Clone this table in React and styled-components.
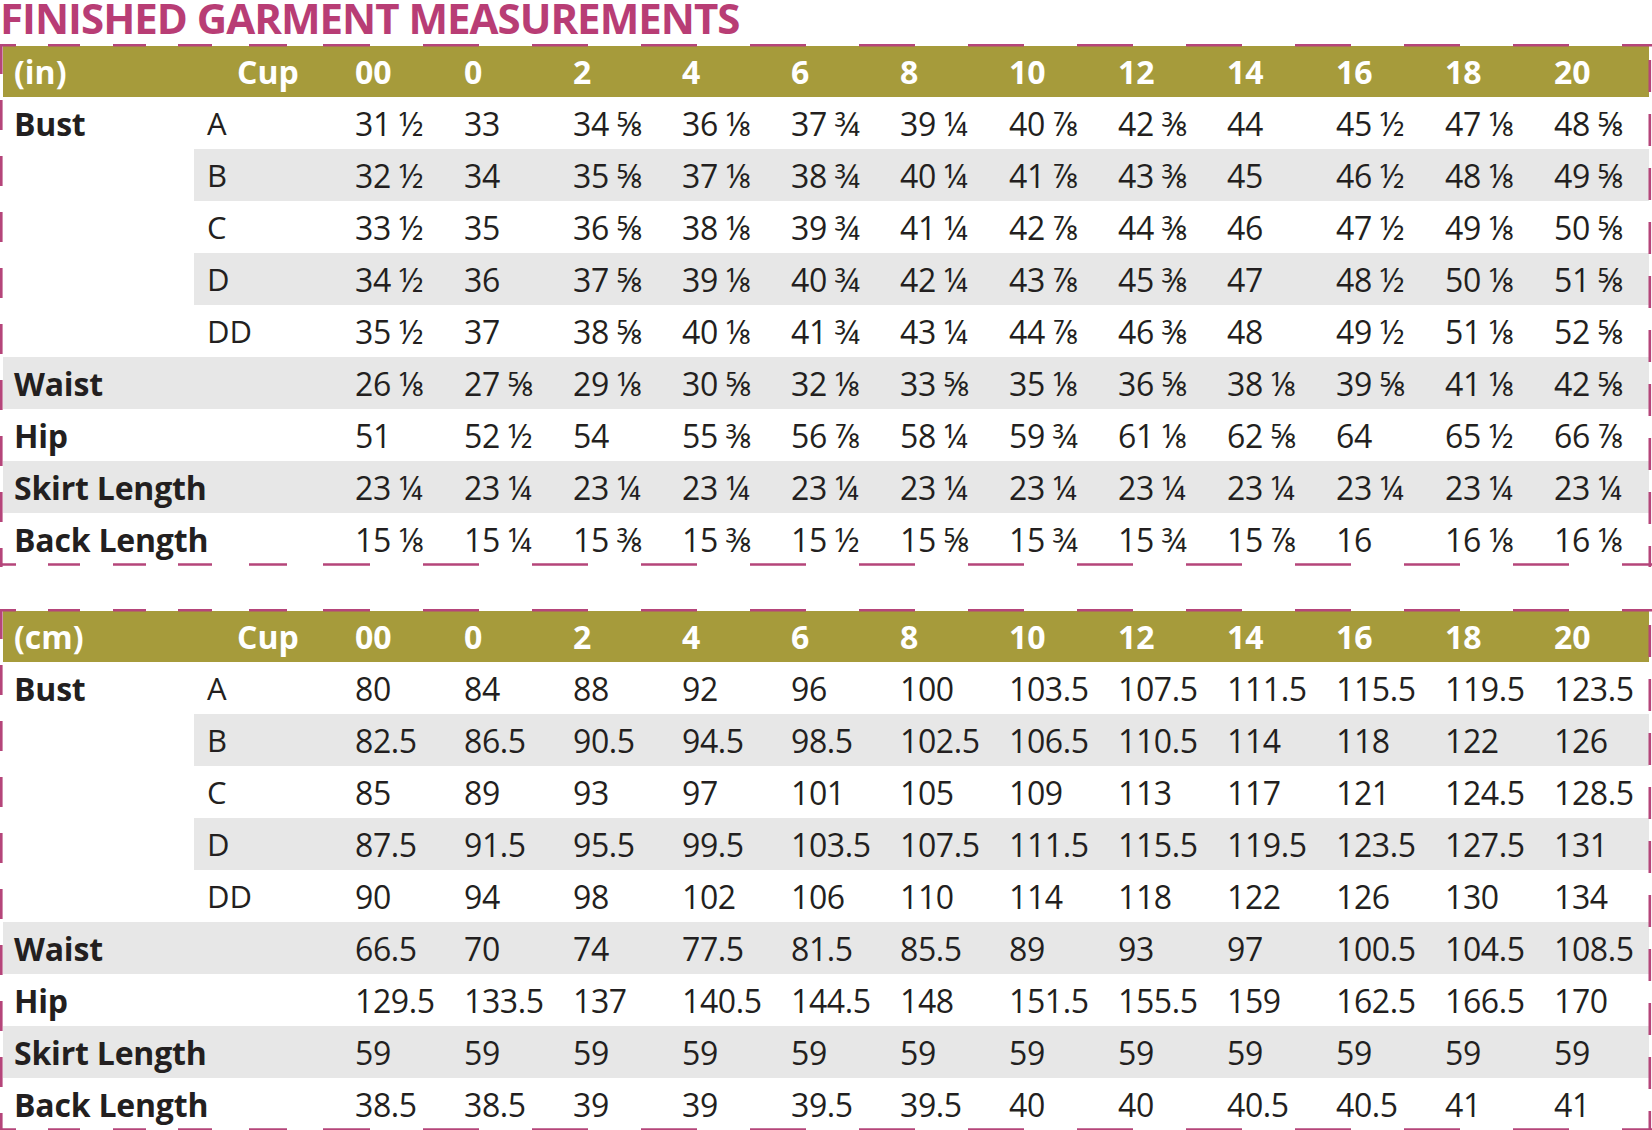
import styled, { createGlobalStyle } from "styled-components";

const GlobalStyle = createGlobalStyle`
  html, body {
    margin: 0;
    padding: 0;
    background: #fff;
  }
  body {
    font-family: "Open Sans", "DejaVu Sans", sans-serif;
    color: #231f20;
  }
`;

const SIZES = ["00", "0", "2", "4", "6", "8", "10", "12", "14", "16", "18", "20"];

const inches = [
  { label: "Bust", cup: "A", values: ["31 ½", "33", "34 ⅝", "36 ⅛", "37 ¾", "39 ¼", "40 ⅞", "42 ⅜", "44", "45 ½", "47 ⅛", "48 ⅝"] },
  { cup: "B", shade: true, values: ["32 ½", "34", "35 ⅝", "37 ⅛", "38 ¾", "40 ¼", "41 ⅞", "43 ⅜", "45", "46 ½", "48 ⅛", "49 ⅝"] },
  { cup: "C", values: ["33 ½", "35", "36 ⅝", "38 ⅛", "39 ¾", "41 ¼", "42 ⅞", "44 ⅜", "46", "47 ½", "49 ⅛", "50 ⅝"] },
  { cup: "D", shade: true, values: ["34 ½", "36", "37 ⅝", "39 ⅛", "40 ¾", "42 ¼", "43 ⅞", "45 ⅜", "47", "48 ½", "50 ⅛", "51 ⅝"] },
  { cup: "DD", values: ["35 ½", "37", "38 ⅝", "40 ⅛", "41 ¾", "43 ¼", "44 ⅞", "46 ⅜", "48", "49 ½", "51 ⅛", "52 ⅝"] },
  { label: "Waist", shade: true, values: ["26 ⅛", "27 ⅝", "29 ⅛", "30 ⅝", "32 ⅛", "33 ⅝", "35 ⅛", "36 ⅝", "38 ⅛", "39 ⅝", "41 ⅛", "42 ⅝"] },
  { label: "Hip", values: ["51", "52 ½", "54", "55 ⅜", "56 ⅞", "58 ¼", "59 ¾", "61 ⅛", "62 ⅝", "64", "65 ½", "66 ⅞"] },
  { label: "Skirt Length", shade: true, values: Array(12).fill("23 ¼") },
  { label: "Back Length", values: ["15 ⅛", "15 ¼", "15 ⅜", "15 ⅜", "15 ½", "15 ⅝", "15 ¾", "15 ¾", "15 ⅞", "16", "16 ⅛", "16 ⅛"] },
];

const centimetres = [
  { label: "Bust", cup: "A", values: ["80", "84", "88", "92", "96", "100", "103.5", "107.5", "111.5", "115.5", "119.5", "123.5"] },
  { cup: "B", shade: true, values: ["82.5", "86.5", "90.5", "94.5", "98.5", "102.5", "106.5", "110.5", "114", "118", "122", "126"] },
  { cup: "C", values: ["85", "89", "93", "97", "101", "105", "109", "113", "117", "121", "124.5", "128.5"] },
  { cup: "D", shade: true, values: ["87.5", "91.5", "95.5", "99.5", "103.5", "107.5", "111.5", "115.5", "119.5", "123.5", "127.5", "131"] },
  { cup: "DD", values: ["90", "94", "98", "102", "106", "110", "114", "118", "122", "126", "130", "134"] },
  { label: "Waist", shade: true, values: ["66.5", "70", "74", "77.5", "81.5", "85.5", "89", "93", "97", "100.5", "104.5", "108.5"] },
  { label: "Hip", values: ["129.5", "133.5", "137", "140.5", "144.5", "148", "151.5", "155.5", "159", "162.5", "166.5", "170"] },
  { label: "Skirt Length", shade: true, values: Array(12).fill("59") },
  { label: "Back Length", values: ["38.5", "38.5", "39", "39", "39.5", "39.5", "40", "40", "40.5", "40.5", "41", "41"] },
];

// frame geometry
const FRAME_W = 1652;
const FRAME_H = 2 + 51 + 9 * 52 + 2;

// the dashes of the frame are irregular on the left, regular under the size columns
function dashPattern() {
  const segs = [[0, 16], [48, 80], [113, 146], [178, 212], [249, 287], [323, 370]];
  for (let k = 0; k < 12; k++) segs.push([423 + 109 * k, 479 + 109 * k]);
  const out = [segs[0][1] - segs[0][0]];
  let pos = segs[0][1];
  for (const [a, b] of segs.slice(1)) {
    out.push(a - pos, b - a);
    pos = b;
  }
  out.push(2000);
  return out.join(" ");
}
const HDASH = dashPattern();

export default function App() {
  return (
    <Page>
      <GlobalStyle />
      <Title>FINISHED GARMENT MEASUREMENTS</Title>
      <SizeTable unit="(in)" rows={inches} />
      <SizeTable unit="(cm)" rows={centimetres} />
    </Page>
  );
}

function SizeTable({ unit, rows }) {
  return (
    <Frame>
      <FrameLines viewBox={`0 0 ${FRAME_W} ${FRAME_H}`} width={FRAME_W} height={FRAME_H}>
        <line x1="0" y1="1.2" x2={FRAME_W} y2="1.2" strokeDasharray={HDASH} />
        <line x1="0" y1={FRAME_H - 2.5} x2={FRAME_W} y2={FRAME_H - 2.5} strokeDasharray={HDASH} />
        <line x1="1.3" y1="0" x2="1.3" y2={FRAME_H} strokeDasharray="30 26" strokeDashoffset="-56" />
        <line x1={FRAME_W - 2.2} y1="0" x2={FRAME_W - 2.2} y2={FRAME_H} strokeDasharray="32 22" strokeDashoffset="-70" />
      </FrameLines>
      <HeaderRow>
        <HeadCell $pad={11}>{unit}</HeadCell>
        <HeadCell $pad={43}>Cup</HeadCell>
        {SIZES.map((s) => (
          <HeadCell key={s}>{s}</HeadCell>
        ))}
      </HeaderRow>
      {rows.map((r, i) => (
        <Row key={i} $shade={r.shade}>
          <LabelCell $blank={r.shade && !r.label}>{r.label}</LabelCell>
          <CupCell>{r.cup}</CupCell>
          {r.values.map((v, j) => (
            <ValueCell key={j}>{v}</ValueCell>
          ))}
        </Row>
      ))}
    </Frame>
  );
}

const Page = styled.div`
  width: 1652px;
  height: 1130px;
  overflow: hidden;
`;

const Title = styled.h1`
  margin: 0 0 10px 0;
  padding-top: 1px;
  font-family: "Open Sans", sans-serif;
  font-weight: 700;
  font-size: 42px;
  line-height: 33px;
  height: 33px;
  letter-spacing: -1px;
  color: #b83d75;
  white-space: nowrap;
`;

const Frame = styled.section`
  position: relative;
  width: 1652px;
  box-sizing: border-box;
  padding: 2px 3px 2px 3px;
  & + & {
    margin-top: 42px;
  }
`;

const FrameLines = styled.svg`
  position: absolute;
  left: 0;
  top: 0;
  pointer-events: none;
  line {
    stroke: #b5457a;
    stroke-width: 2.6;
  }
`;

const columns = `191px 161px repeat(11, 109px) 1fr`;

const HeaderRow = styled.div`
  display: grid;
  grid-template-columns: ${columns};
  height: 51px;
  background: #a69b3b;
`;

const HeadCell = styled.div`
  padding-left: ${(p) => p.$pad || 0}px;
  font-family: "Open Sans", sans-serif;
  font-weight: 700;
  font-size: 32px;
  line-height: 51px;
  color: #fff;
  white-space: nowrap;
`;

const Row = styled.div`
  display: grid;
  grid-template-columns: ${columns};
  height: 52px;
  background: ${(p) => (p.$shade ? "#e7e7e7" : "#fff")};
`;

const LabelCell = styled.div`
  padding-left: 11px;
  font-family: "Open Sans", sans-serif;
  font-weight: 700;
  font-size: 32px;
  line-height: 53px;
  letter-spacing: -0.2px;
  white-space: nowrap;
  background: ${(p) => (p.$blank ? "#fff" : "transparent")};
`;

const CupCell = styled.div`
  padding-left: 13px;
  font-size: 31px;
  line-height: 53px;
  white-space: nowrap;
`;

const ValueCell = styled.div`
  font-size: 32px;
  line-height: 54px;
  letter-spacing: -0.4px;
  white-space: nowrap;
`;
